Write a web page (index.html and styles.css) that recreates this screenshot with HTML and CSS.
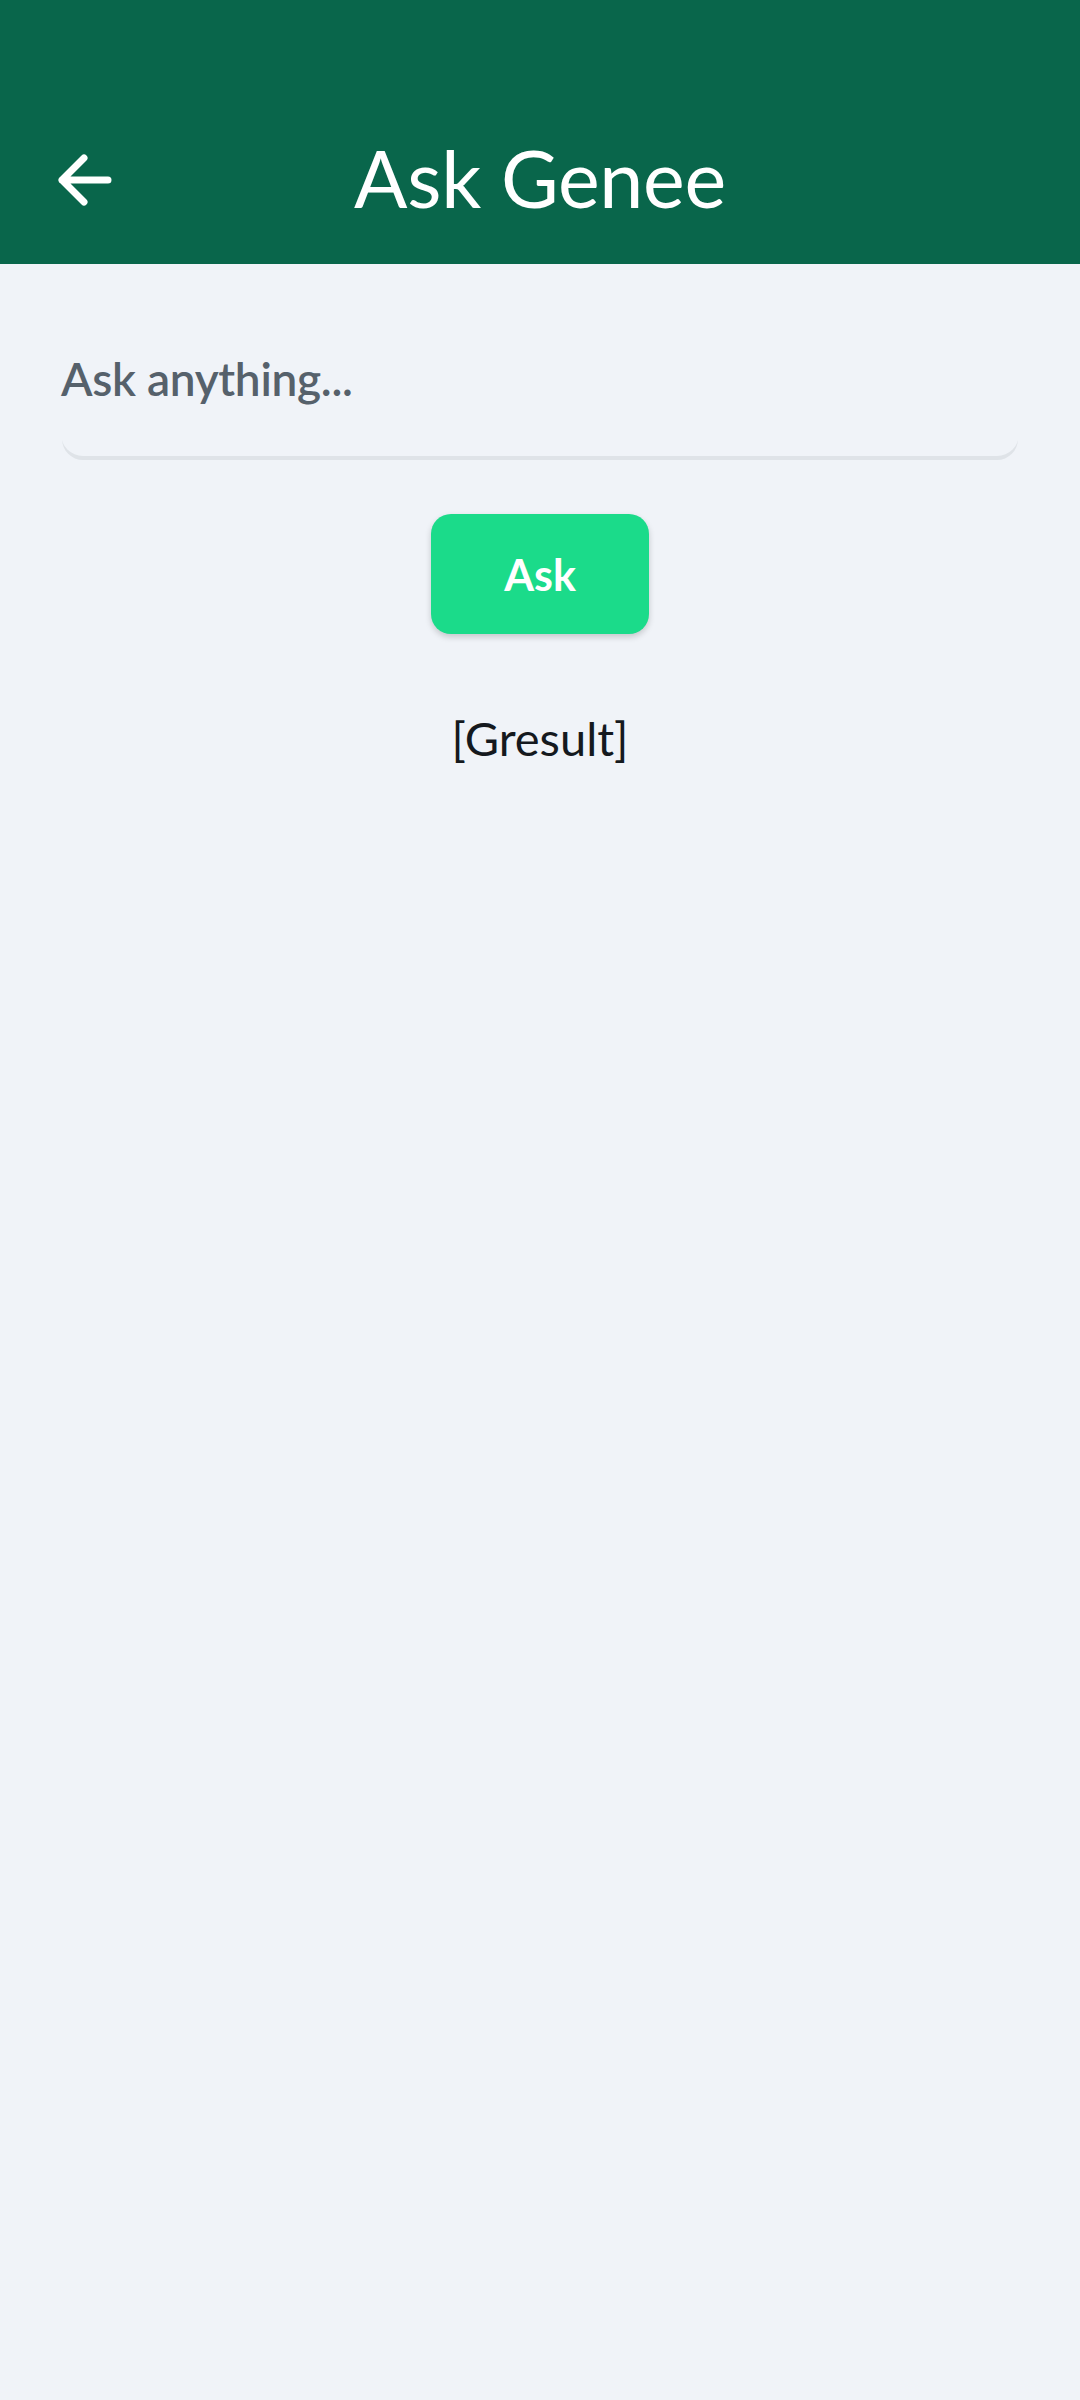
FILE: index.html
```html
<!DOCTYPE html>
<html>
<head>
<meta charset="utf-8">
<link rel="stylesheet" href="styles.css">
</head>
<body>
<header class="appbar">
  <div class="toolbar">
    <div class="back">
      <svg width="60" height="60" viewBox="0 0 60 60"><path d="M54 30H8M30 8L8 30L30 52" fill="none" stroke="#fff" stroke-width="7" stroke-linecap="round" stroke-linejoin="round"/></svg>
    </div>
    <h1 class="title">Ask Genee</h1>
    <div></div>
  </div>
</header>
<main class="content">
  <div class="field"><span class="placeholder">Ask anything...</span></div>
  <div class="actions"><button class="ask">Ask</button></div>
  <p class="result">[Gresult]</p>
</main>
</body>
</html>
```

FILE: styles.css
```css
html, body {
  margin: 0;
  padding: 0;
  background: #f0f3f8;
  font-family: Lato, "Noto Sans", sans-serif;
  width: 1080px;
  height: 2400px;
}
.appbar {
  background: #09664b;
  padding-top: 96px;
  height: 168px;
}
.toolbar {
  height: 168px;
  display: grid;
  grid-template-columns: 1fr auto 1fr;
  align-items: center;
}
.back {
  padding-left: 54px;
  display: flex;
  align-items: center;
}
.title {
  margin: 0 0 6px;
  color: #fff;
  font-weight: 400;
  font-size: 79px;
  letter-spacing: -0.3px;
}
.content {
  padding: 0 61px;
}
.field {
  margin-top: 44px;
  height: 148px;
  padding-bottom: 8px;
  box-sizing: border-box;
  border-radius: 0 0 22px 22px;
  box-shadow: 0 5px 0 -1px #dfe3e8;
  display: flex;
  align-items: center;
}
.placeholder {
  color: #56616b;
  font-size: 46px;
  font-weight: 600;
  letter-spacing: -0.3px;
}
.actions {
  display: flex;
  justify-content: center;
  margin-top: 58px;
}
.ask {
  width: 218px;
  height: 120px;
  border: none;
  border-radius: 20px;
  background: #1bdb8a;
  color: #fff;
  font-family: Lato, sans-serif;
  font-weight: 700;
  font-size: 43px;
  box-shadow: 0 3px 6px rgba(0,0,0,0.18);
}
.result {
  margin: 76px 0 0;
  text-align: center;
  color: #15191e;
  font-size: 47px;
}
```
